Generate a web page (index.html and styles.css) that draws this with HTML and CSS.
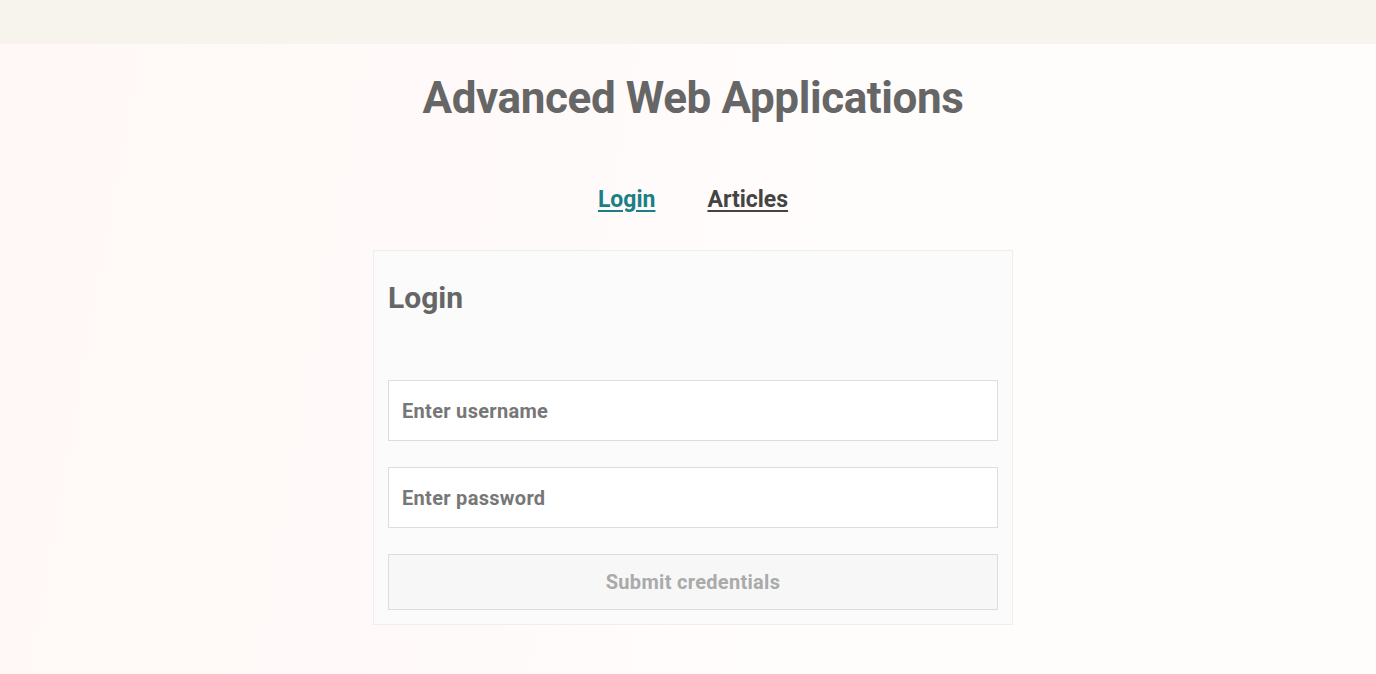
FILE: index.html
```html
<!DOCTYPE html>
<html lang="en">
<head>
<meta charset="utf-8">
<title>Advanced Web Applications</title>
<link rel="stylesheet" href="styles.css">
</head>
<body>
<div class="topbar"></div>
<main class="page">
  <h1 class="title">Advanced Web Applications</h1>
  <nav class="nav">
    <a class="nav-link active" href="#">Login</a>
    <a class="nav-link" href="#">Articles</a>
  </nav>
  <form class="card">
    <h2 class="card-title">Login</h2>
    <input class="field" type="text" placeholder="Enter username">
    <input class="field" type="password" placeholder="Enter password">
    <button class="submit" type="button" disabled>Submit credentials</button>
  </form>
</main>
</body>
</html>
```
FILE: styles.css
```css
html, body {
  margin: 0;
  padding: 0;
}
body {
  font-family: Roboto, "Noto Sans", sans-serif;
  background: linear-gradient(100deg, #fff8f6 0%, #fffafa 40%, #fffdfb 60%, #fffcfc 100%);
  min-height: 674px;
  color: #666;
}
.topbar {
  height: 44px;
  background: #f7f4ee;
}
.page {
  display: flex;
  flex-direction: column;
  align-items: center;
  padding-left: 10px;
}
.title {
  margin: 26px 0 0;
  font-size: 44px;
  line-height: 56px;
  font-weight: 700;
  color: #666;
  letter-spacing: -0.4px;
}
.nav {
  display: flex;
  gap: 52px;
  margin-top: 59px;
}
.nav-link {
  font-size: 23px;
  line-height: 30px;
  font-weight: 700;
  color: #444;
  text-decoration: underline;
  text-underline-offset: 3px;
  text-decoration-thickness: 2px;
}
.nav-link.active {
  color: #1b7f86;
}
.card {
  box-sizing: border-box;
  width: 640px;
  margin-top: 35px;
  padding: 15px 14px 14px;
  background: #fbfbfb;
  border: 1px solid #eee;
  display: flex;
  flex-direction: column;
}
.card-title {
  margin: 0;
  font-size: 30px;
  line-height: 64px;
  font-weight: 700;
  color: #666;
  height: 114px;
}
.field {
  box-sizing: border-box;
  height: 61px;
  margin: 0 0 26px;
  padding: 0 13px;
  border: 1px solid #ddd;
  background: #fff;
  font-family: inherit;
  font-size: 20px;
  font-weight: 700;
  color: #666;
  letter-spacing: 0.3px;
  outline: none;
}
.field::placeholder {
  color: #777;
}
.submit {
  box-sizing: border-box;
  height: 56px;
  border: 1px solid #ddd;
  background: #f7f7f7;
  font-family: inherit;
  font-size: 20px;
  font-weight: 700;
  color: #aaa;
  letter-spacing: 0.3px;
}
```
